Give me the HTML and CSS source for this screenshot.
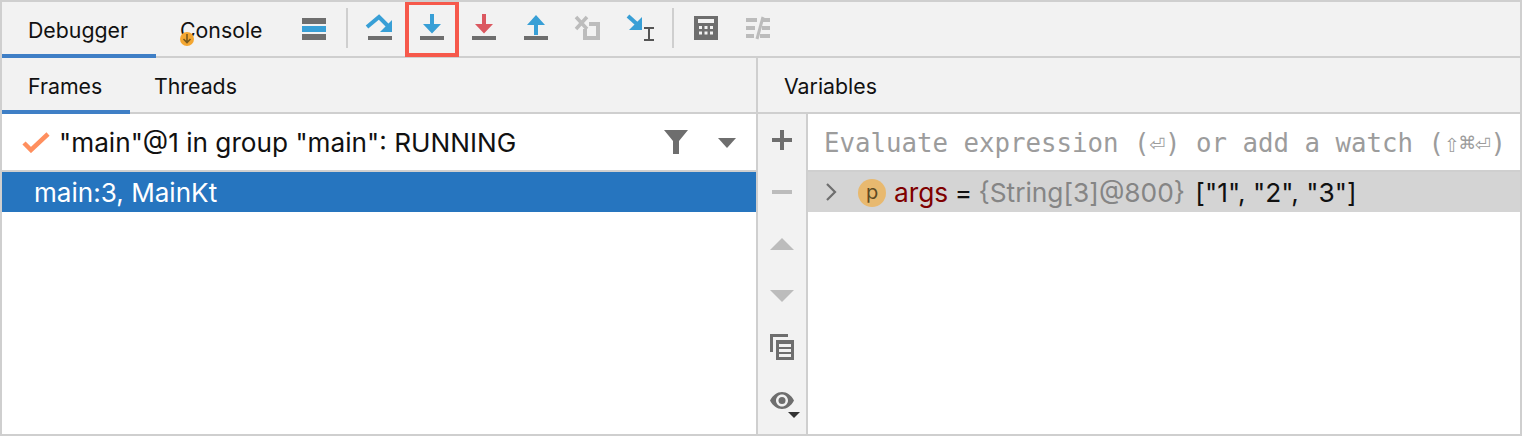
FILE: index.html
```html
<!DOCTYPE html>
<html lang="en">
<head>
<meta charset="utf-8">
<title>Debugger</title>
<link rel="stylesheet" href="styles.css">
</head>
<body>
<div class="app">
  <div class="tabs toolbar">
    <div class="tab active tab-debugger">Debugger</div>
    <div class="tab tab-console">Console
      <svg class="badge" width="16" height="16" viewBox="0 0 16 16"><circle cx="8" cy="8" r="7" fill="#f4a732"/><path d="M8 3v8M4.5 8L8 11.5 11.5 8" fill="none" stroke="#7a5a1e" stroke-width="1.6"/></svg>
    </div>
    <div class="btn"><svg class="ico" viewBox="0 0 32 32"><path fill="#6e6e6e" d="M4 6h24v6H4zM4 22h24v6H4z"/><path fill="#389fd6" d="M4 14h24v6H4z"/></svg></div>
    <div class="sep"></div>
    <div class="btn"><svg class="ico" viewBox="0 0 32 32"><path fill="#6e6e6e" d="M4 24h24v4H4z"/><path fill="none" stroke="#389fd6" stroke-width="4" d="M3 15L15 5l9 9"/><path fill="#389fd6" d="M28 8v12H16z"/></svg></div>
    <div class="btn highlighted"><svg class="ico" viewBox="0 0 32 32"><path fill="#6e6e6e" d="M4 24h24v4H4z"/><path fill="#389fd6" d="M14 2h4v10h7l-9 9.500L7 12h7z"/></svg></div>
    <div class="btn"><svg class="ico" viewBox="0 0 32 32"><path fill="#6e6e6e" d="M4 24h24v4H4z"/><path fill="#db5860" d="M14 2h4v10h7l-9 9.500L7 12h7z"/></svg></div>
    <div class="btn"><svg class="ico" viewBox="0 0 32 32"><path fill="#6e6e6e" d="M4 24h24v4H4z"/><path fill="#389fd6" d="M16 3l9 10h-7v10h-4V13H7z"/></svg></div>
    <div class="btn"><svg class="ico" viewBox="0 0 32 32"><path fill="none" stroke="#bcbcbc" stroke-width="4" d="M17 12h9v14H13v-9"/><path fill="none" stroke="#bcbcbc" stroke-width="3.500" d="M4 5l11 12M15 5L4 17"/></svg></div>
    <div class="btn"><svg class="ico" viewBox="0 0 32 32"><path fill="#389fd6" d="M18 5v13H5z"/><path fill="none" stroke="#389fd6" stroke-width="4" d="M4 4l10 9"/><path fill="none" stroke="#555" stroke-width="2" d="M20 16h10M20 28h10M25 16v12"/></svg></div>
    <div class="sep"></div>
    <div class="btn"><svg class="ico" viewBox="0 0 32 32"><path fill="#6e6e6e" fill-rule="evenodd" d="M4 4h24v24H4zM8 7v4h16V7zM9 14v3h3v-3zM14.500 14v3h3v-3zM20 14v3h3v-3zM9 19.500v3h3v-3zM14.500 19.500v3h3v-3zM20 19.500v3h3v-3z"/></svg></div>
    <div class="btn"><svg class="ico" viewBox="0 0 32 32"><path fill="#bcbcbc" d="M4 6h11v4H4zM4 14h9v4H4zM4 22h8v4H4zM21 6h7v4h-7zM20 14h8v4h-8zM18 22h10v4H18z"/><path fill="none" stroke="#bcbcbc" stroke-width="3" d="M21 5l-6 22"/></svg></div>
  </div>
  <div class="panes">
    <div class="left">
      <div class="tabs">
        <div class="tab active tab-frames">Frames</div>
        <div class="tab tab-threads">Threads</div>
      </div>
      <div class="thread">
        <svg class="check" width="28" height="22" viewBox="0 0 28 22"><path fill="none" stroke="#ff8f5e" stroke-width="4.500" d="M2 12l7 7L26 3"/></svg>
        <span class="thread-name">"main"@1 in group "main": RUNNING</span>
        <svg class="filter" width="24" height="24" viewBox="0 0 24 24"><path fill="#6e6e6e" d="M0 0h24L15 11v13H9V11z"/></svg>
        <svg class="caret" width="18" height="10" viewBox="0 0 18 10"><path fill="#6e6e6e" d="M0 0h18L9 10z"/></svg>
      </div>
      <div class="frame">main:3, MainKt</div>
    </div>
    <div class="right">
      <div class="tabs"><div class="tab tab-vars">Variables</div></div>
      <div class="vars">
        <div class="side">
          <div class="sbtn"><svg class="ico" viewBox="0 0 32 32"><path fill="#6e6e6e" d="M14 6h4v8h8v4h-8v8h-4v-8H6v-4h8z"/></svg></div>
          <div class="sbtn"><svg class="ico" viewBox="0 0 32 32"><path fill="#bcbcbc" d="M6 14h20v4H6z"/></svg></div>
          <div class="sbtn"><svg class="ico" viewBox="0 0 32 32"><path fill="#bcbcbc" d="M4 22L16 10l12 12z"/></svg></div>
          <div class="sbtn"><svg class="ico" viewBox="0 0 32 32"><path fill="#bcbcbc" d="M4 10h24L16 22z"/></svg></div>
          <div class="sbtn"><svg class="ico" viewBox="0 0 32 32"><path fill="#6e6e6e" fill-rule="evenodd" d="M4 2h18v3H7v15H4zM10 8h18v20H10zM13 12v3h12v-3zM13 17v3h12v-3zM13 22v3h12v-3z"/></svg></div>
          <div class="sbtn"><svg class="ico" viewBox="0 0 32 32"><path fill="#6e6e6e" fill-rule="evenodd" d="M4 16.500C7 11 11 8 16 8s9 3 12 8.500C25 22 21 25 16 25S7 22 4 16.500zM16 10.500C12.700 10.500 10 13.200 10 16.500s2.700 6 6 6 6-2.700 6-6-2.700-6-6-6z"/><circle cx="16" cy="16.500" r="3.500" fill="#6e6e6e"/><path fill="#333" d="M22 28h12l-6 6z"/></svg></div>
        </div>
        <div class="content">
          <div class="watch">Evaluate expression (⏎) or add a watch (⇧⌘⏎)</div>
          <div class="var">
            <svg class="chev" width="12" height="18" viewBox="0 0 12 18"><path fill="none" stroke="#6e6e6e" stroke-width="2.200" d="M2 1l8 8-8 8"/></svg>
            <span class="pbadge">p</span>
            <span class="vname">args</span><span class="veq">&nbsp;=&nbsp;</span><span class="vtype">{String[3]@800}</span><span class="vval">&nbsp;["1", "2", "3"]</span>
          </div>
        </div>
      </div>
    </div>
  </div>
</div>
</body>
</html>
```
FILE: styles.css
```css
*, *::after { box-sizing: border-box; }
html, body { margin: 0; padding: 0; background: #fff; }
body { font-family: "Inter", "Liberation Sans", sans-serif; color: #111; }
.app { width: 1522px; height: 436px; border: 2px solid #cfcfcf; display: flex; flex-direction: column; overflow: hidden; }
.tabs { height: 56px; flex: none; display: flex; background: #f2f2f2; box-shadow: inset 0 -2px #cfcfcf; }
.tab { height: 56px; font-size: 21.300px; line-height: 56px; position: relative; padding-left: 26px; flex: none; }
.tab.active { border-bottom: 4px solid #3f7fc6; }
.tab-debugger { width: 154px; }
.tab-console { width: 132px; padding-left: 24px; }
.tab-frames { width: 128px; }
.tab-threads { padding-left: 24px; }
.tab-vars { padding-left: 26px; }
.badge { position: absolute; left: 23px; top: 29px; }
.btn { width: 52px; height: 54px; padding: 10px 10px 0; flex: none; position: relative; }
.ico { display: block; width: 32px; height: 32px; overflow: visible; }
.sep { width: 2px; height: 40px; margin: 6px 6px 0; background: #cfcfcf; flex: none; }
.highlighted::after { content: ""; position: absolute; left: -1px; top: -1px; width: 54px; height: 56px; border: 4px solid #f6594b; }
.panes { flex: 1; display: flex; min-height: 0; }
.left { width: 756px; flex: none; border-right: 2px solid #cfcfcf; }
.right { flex: 1; min-width: 0; }
.thread { height: 58px; border-bottom: 2px solid #cfcfcf; display: flex; align-items: center; padding: 0 20px 0 20px; }
.check { flex: none; margin-right: 9px; }
.thread-name { font-size: 26.200px; flex: 1; }
.filter { flex: none; margin-right: 30px; }
.caret { flex: none; margin-top: 2px; }
.frame { height: 40px; background: #2675bf; color: #fff; font-size: 26.100px; line-height: 42px; padding-left: 32px; }
.vars { display: flex; height: 320px; }
.side { width: 50px; flex: none; background: #f2f2f2; border-right: 2px solid #cfcfcf; display: flex; flex-direction: column; }
.sbtn { height: 52px; padding: 10px 8px 0; flex: none; }
.content { flex: 1; min-width: 0; }
.watch { height: 58px; border-bottom: 2px solid #cfcfcf; font-family: "DejaVu Sans Mono", monospace; font-size: 25.750px; line-height: 58px; color: #9c9c9c; padding-left: 16px; white-space: nowrap; overflow: hidden; }
.var { height: 40px; padding-top: 2px; background: #d4d4d4; display: flex; align-items: center; font-size: 26.300px; line-height: 38px; padding-left: 17px; white-space: nowrap; }
.chev { flex: none; margin-right: 21px; margin-top: -2px; }
.pbadge { width: 28px; height: 28px; border-radius: 50%; background: #e8b96f; color: #5e4a22; font-size: 20px; line-height: 26px; text-align: center; margin-right: 8px; flex: none; }
.vname { color: #7f0000; }
.veq { color: #111; margin: 0 -1px; }
.vtype { color: #858585; }
.vval { color: #111; margin-left: 3px; }
```
